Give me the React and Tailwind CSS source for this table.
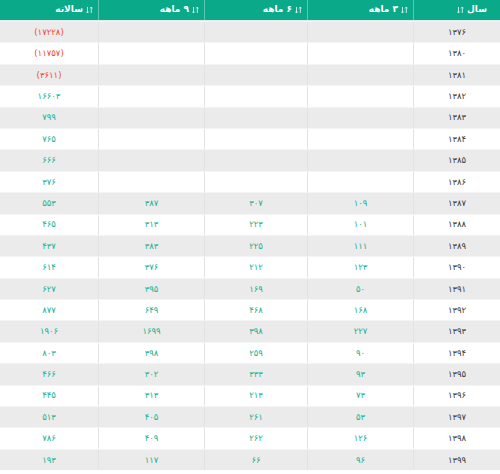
import React from "react";

const rows = [
  ["۱۳۷۶", "", "", "", "(۱۷۲۲۸)"],
  ["۱۳۸۰", "", "", "", "(۱۱۷۵۷)"],
  ["۱۳۸۱", "", "", "", "(۳۶۱۱)"],
  ["۱۳۸۲", "", "", "", "۱۶۶۰۳"],
  ["۱۳۸۳", "", "", "", "۷۹۹"],
  ["۱۳۸۴", "", "", "", "۷۶۵"],
  ["۱۳۸۵", "", "", "", "۶۶۶"],
  ["۱۳۸۶", "", "", "", "۳۷۶"],
  ["۱۳۸۷", "۱۰۹", "۳۰۷", "۳۸۷", "۵۵۳"],
  ["۱۳۸۸", "۱۰۱", "۲۲۳", "۳۱۳", "۴۶۵"],
  ["۱۳۸۹", "۱۱۱", "۲۲۵", "۳۸۳", "۴۳۷"],
  ["۱۳۹۰", "۱۲۳", "۲۱۲", "۳۷۶", "۶۱۴"],
  ["۱۳۹۱", "۵۰", "۱۶۹", "۳۹۵", "۶۲۷"],
  ["۱۳۹۲", "۱۶۸", "۴۶۸", "۶۴۹", "۸۷۷"],
  ["۱۳۹۳", "۲۲۷", "۳۹۸", "۱۶۹۹", "۱۹۰۶"],
  ["۱۳۹۴", "۹۰", "۲۵۹", "۳۹۸", "۸۰۳"],
  ["۱۳۹۵", "۹۳", "۳۳۳", "۳۰۲", "۴۶۶"],
  ["۱۳۹۶", "۷۳", "۲۱۳", "۳۱۳", "۴۴۵"],
  ["۱۳۹۷", "۵۳", "۲۶۱", "۴۰۵", "۵۱۳"],
  ["۱۳۹۸", "۱۲۶", "۲۶۲", "۴۰۹", "۷۸۶"],
  ["۱۳۹۹", "۹۶", "۶۶", "۱۱۷", "۱۹۳"],
];

function SortIcon() {
  return (
    <svg width="7" height="8" viewBox="0 0 7 8" className="shrink-0">
      <path d="M1.5 1 V7 M0.3 5.6 L1.5 7 L2.7 5.6" stroke="#d9f3ec" strokeWidth="0.9" fill="none" />
      <path d="M5.3 7 V1 M4.1 2.4 L5.3 1 L6.5 2.4" stroke="#d9f3ec" strokeWidth="0.9" fill="none" />
    </svg>
  );
}

const headers = ["سال", "۳ ماهه", "۶ ماهه", "۹ ماهه", "سالانه"];
const grid = "grid grid-cols-[87px_106px_103px_106px_98px]";

export default function App() {
  return (
    <div
      dir="rtl"
      className="w-[500px] h-[474px] bg-white overflow-hidden"
      style={{ fontFamily: '"DejaVu Sans", sans-serif' }}
    >
      <div className={`${grid} h-[21px] bg-[#0aa98a] border-b border-[#e6e6e6]`}>
        {headers.map((h, i) => (
          <div
            key={i}
            className={`flex items-center gap-[3px] text-[9px] font-bold text-white ${
              i === 0 ? "pr-[13px] flex-row-reverse justify-end" : "pr-[5px]"
            } ${i < 4 ? "border-l border-[#5cc7b1]" : ""}`}
          >
            {i === 0 ? (
              <>
                <SortIcon />
                <span>{h}</span>
              </>
            ) : (
              <>
                <SortIcon />
                <span>{h}</span>
              </>
            )}
          </div>
        ))}
      </div>
      {rows.map((r, ri) => (
        <div
          key={ri}
          className={`${grid} h-[21.4px] border-t border-[#f4f4f4] ${
            ri % 2 === 0 ? "bg-[#ebebeb]" : "bg-white"
          }`}
        >
          {r.map((c, ci) => (
            <div
              key={ci}
              className={`flex items-center justify-center text-[8.5px] ${
                ci < 4 ? "border-l border-[#e3e3e3]" : ""
              } ${
                ci === 0
                  ? "text-[#3d3d3d]"
                  : c.startsWith("(")
                  ? "text-[#f0492c]"
                  : "text-[#17b394]"
              }`}
            >
              {c}
            </div>
          ))}
        </div>
      ))}
    </div>
  );
}
